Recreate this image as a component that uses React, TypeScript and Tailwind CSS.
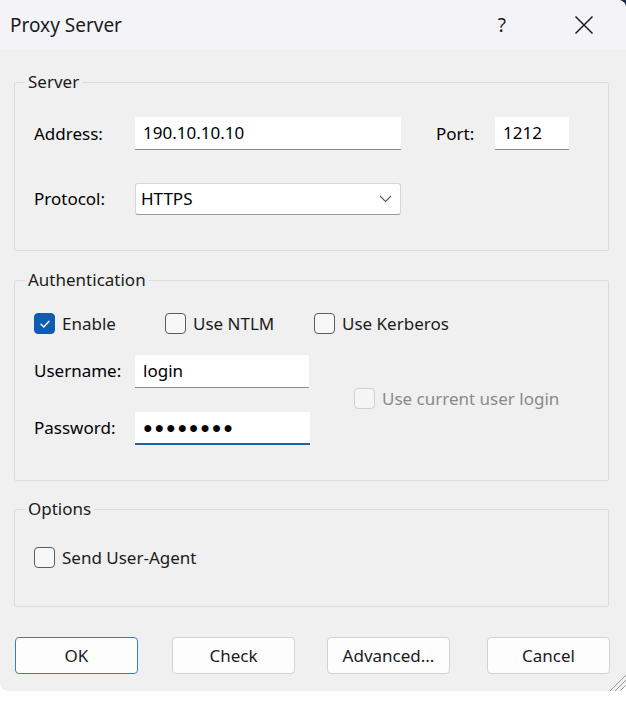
import React from 'react';

const font = { fontFamily: '"Noto Sans", "Liberation Sans", sans-serif' };

function CheckBox({ checked, disabled, label }: { checked?: boolean; disabled?: boolean; label: string }) {
  return (
    <label className={`flex items-center gap-[7px] ${disabled ? 'text-[#8a8a8a]' : 'text-[#1b1b1b]'}`}>
      <span
        className={`flex h-[21px] w-[21px] items-center justify-center rounded-[4px] border ${
          checked
            ? 'border-[#0f5cb0] bg-[#0f5cb0]'
            : disabled
              ? 'border-[#cfcfcf] bg-[#f5f5f5]'
              : 'border-[#5c5c5c] bg-[#f7f7f7]'
        }`}
      >
        {checked && (
          <svg width="12" height="12" viewBox="0 0 12 12" fill="none">
            <path d="M2 6.3 4.8 9 10 3.2" stroke="white" strokeWidth="1.3" strokeLinecap="round" strokeLinejoin="round" />
          </svg>
        )}
      </span>
      <span>{label}</span>
    </label>
  );
}

function TextBox({ value, width, focused, big }: { value: string; width: string; focused?: boolean; big?: boolean }) {
  return (
    <div
      className={`flex h-[33px] items-center bg-white pl-[8px] ${width} ${
        focused ? 'border-b-2 border-[#1f62a8]' : 'border-b border-[#8d8d8d]'
      }`}
    >
      <span className={big ? 'text-[16px] tracking-[1.8px]' : ''}>{value}</span>
    </div>
  );
}

function Group({ title, className, children }: { title: string; className?: string; children: React.ReactNode }) {
  return (
    <fieldset className={`ml-[14px] w-[595px] rounded-[2px] border border-[#dcdcdc] ${className ?? ''}`}>
      <legend className="ml-[10px] px-[3px] leading-[20px] text-[#1b1b1b]">{title}</legend>
      {children}
    </fieldset>
  );
}

function Button({ label, primary }: { label: string; primary?: boolean }) {
  return (
    <button
      className={`h-[37px] w-[123px] rounded-[4px] bg-[#fdfdfd] text-[#1b1b1b] ${
        primary ? 'border-[1.5px] border-[#3f7db8]' : 'border border-[#d2d2d2]'
      }`}
    >
      {label}
    </button>
  );
}

export default function App() {
  return (
    <div className="relative h-[702px] w-[626px] overflow-hidden bg-white text-[17px]" style={font}>
      <div className="absolute right-0 top-0 h-[10px] w-[10px] bg-[#1c2a4a]" />
      <div className="relative flex h-[691px] flex-col overflow-hidden rounded-b-[8px] rounded-tr-[8px] bg-[#f0f0f0]">
        {/* Title bar */}
        <div className="flex h-[50px] shrink-0 items-center bg-[#f3f3f8] pl-[10px] pr-[32px]">
          <span className="flex-1 text-[19px] text-[#1b1b1b]">Proxy Server</span>
          <span className="mr-[68px] text-[19px] text-[#1b1b1b]">?</span>
          <svg width="20" height="20" viewBox="0 0 20 20">
            <path d="M1.5 1.5 18.5 18.5M18.5 1.5 1.5 18.5" stroke="#1b1b1b" strokeWidth="1.5" />
          </svg>
        </div>

        <div className="flex flex-col pt-[22px]">
          {/* Server */}
          <Group title="Server" className="h-[179px]">
            <div className="flex flex-col gap-[33px] pl-[19px] pt-[25px]">
              <div className="flex items-center">
                <span className="w-[101px]">Address:</span>
                <TextBox value="190.10.10.10" width="w-[266px]" />
                <span className="ml-[35px] w-[59px]">Port:</span>
                <TextBox value="1212" width="w-[74px]" />
              </div>
              <div className="flex items-center">
                <span className="w-[101px]">Protocol:</span>
                <div className="flex h-[32px] w-[266px] items-center justify-between rounded-[3px] border border-[#d6d6d6] border-b-[#9a9a9a] bg-white pl-[5px] pr-[8px]">
                  <span>HTTPS</span>
                  <svg width="13" height="8" viewBox="0 0 13 8">
                    <path d="M1 1 6.5 6.5 12 1" stroke="#5a5a5a" strokeWidth="1.1" fill="none" />
                  </svg>
                </div>
              </div>
            </div>
          </Group>

          {/* Authentication */}
          <Group title="Authentication" className="mt-[19px] h-[211px]">
            <div className="flex flex-col pl-[19px] pt-[21px]">
              <div className="flex items-center">
                <div className="w-[131px]"><CheckBox checked label="Enable" /></div>
                <div className="w-[149px]"><CheckBox label="Use NTLM" /></div>
                <CheckBox label="Use Kerberos" />
              </div>
              <div className="mt-[18px] flex items-center">
                <div className="flex flex-col gap-[24px]">
                  <div className="flex items-center">
                    <span className="w-[101px]">Username:</span>
                    <TextBox value="login" width="w-[174px]" />
                  </div>
                  <div className="flex items-center">
                    <span className="w-[101px]">Password:</span>
                    <TextBox value="●●●●●●●●" width="w-[175px]" focused big />
                  </div>
                </div>
                <div className="ml-[44px] mt-[-2px]">
                  <CheckBox disabled label="Use current user login" />
                </div>
              </div>
            </div>
          </Group>

          {/* Options */}
          <Group title="Options" className="mt-[18px] h-[108px]">
            <div className="pl-[19px] pt-[26px]">
              <CheckBox label="Send User-Agent" />
            </div>
          </Group>

          {/* Buttons */}
          <div className="mt-[30px] flex items-center pl-[15px]">
            <Button primary label="OK" />
            <div className="ml-[34px]"><Button label="Check" /></div>
            <div className="ml-[32px]"><Button label="Advanced..." /></div>
            <div className="ml-[37px]"><Button label="Cancel" /></div>
          </div>
        </div>

        {/* Resize grip */}
        <svg className="absolute bottom-0 right-0" width="22" height="22" viewBox="0 0 22 22">
          <path d="M22 6 6 22M22 11 11 22M22 16 16 22" stroke="#9a9a9a" strokeWidth="1" />
        </svg>
      </div>
    </div>
  );
}
